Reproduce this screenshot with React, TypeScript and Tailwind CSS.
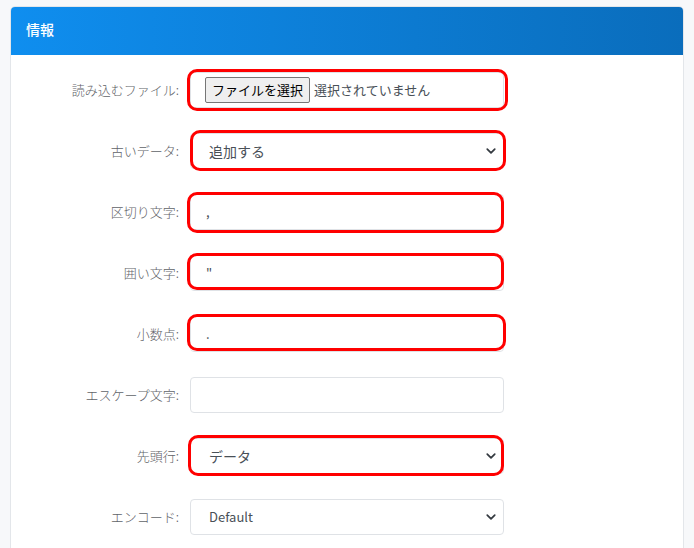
import type { ReactNode } from "react";

const jp = { fontFamily: '"Noto Sans CJK JP", "Noto Sans", sans-serif' };

function Chevron() {
  return (
    <svg width="10" height="10" viewBox="0 0 16 16" className="text-[#343a40]">
      <path d="M2 5l6 6 6-6" fill="none" stroke="currentColor" strokeWidth="2.8" strokeLinecap="round" strokeLinejoin="round" />
    </svg>
  );
}

function Highlight({ className }: { className: string }) {
  return <div className={`pointer-events-none absolute rounded-[10px] border-[3.5px] border-[#ff0000] ${className}`} />;
}

function Row({ label, children, mark }: { label: string; children: ReactNode; mark?: string }) {
  return (
    <div className="flex items-center">
      <div className="w-[168px] text-right text-[13px] font-light text-[#5f6368]" style={jp}>
        {label}:
      </div>
      <div className="relative ml-[11px] w-[314px]">
        {children}
        {mark && <Highlight className={mark} />}
      </div>
    </div>
  );
}

function TextBox({ value }: { value?: string }) {
  return (
    <div className="flex h-[36px] items-center rounded-[4px] border border-[#dfe2e6] bg-white px-[15px] text-[13px] text-[#495057]">
      {value}
    </div>
  );
}

function SelectBox({ value, size = "text-[14px]" }: { value: string; size?: string }) {
  return (
    <div className="flex h-[36px] items-center justify-between rounded-[4px] border border-[#dfe2e6] bg-white pl-[18px] pr-[7px] text-[#495057]">
      <span className={size} style={jp}>{value}</span>
      <Chevron />
    </div>
  );
}

export default function App() {
  return (
    <div className="min-h-[548px] bg-[#f7f8fa] pt-[6px] pl-[10px] pr-[10px]" style={jp}>
      <div className="h-[560px] rounded-t-[5px] border border-[#e3e6ea] bg-white">
        <div className="flex h-[48px] items-center rounded-t-[4px] bg-gradient-to-r from-[#0f8eef] to-[#0a6dbc] px-[15px] pb-[4px]">
          <h3 className="text-[14px] font-medium text-white">情報</h3>
        </div>
        <div className="flex flex-col gap-[25px] pt-[17px]">
          <Row label="読み込むファイル" mark="-left-[3px] -right-[4px] -top-[3px] -bottom-[3px]">
            <div className="flex h-[36px] items-center rounded-[4px] border border-[#dfe2e6] bg-white pl-[14px] text-[13px] text-[#495057]">
              <span className="rounded-[2px] border border-[#767676] bg-[#efefef] px-[6px] py-[2px] text-[13px] text-black">
                ファイルを選択
              </span>
              <span className="ml-[4px]">選択されていません</span>
            </div>
          </Row>
          <Row label="古いデータ" mark="left-0 right-[-2px] -top-[3px] -bottom-[2px]">
            <SelectBox value="追加する" />
          </Row>
          <Row label="区切り文字" mark="-left-[3px] right-0 -top-[2px] -bottom-[3px]">
            <TextBox value="," />
          </Row>
          <Row label="囲い文字" mark="-left-[3px] right-0 -top-[2px] bottom-[1px]">
            <TextBox value={'"'} />
          </Row>
          <Row label="小数点" mark="-left-[3px] right-[-2px] -top-[2px] bottom-[1px]">
            <TextBox value="." />
          </Row>
          <Row label="エスケープ文字">
            <TextBox />
          </Row>
          <Row label="先頭行" mark="-left-[2px] right-0 -top-[3px] -bottom-[2px]">
            <SelectBox value="データ" />
          </Row>
          <Row label="エンコード">
            <SelectBox value="Default" size="text-[13px]" />
          </Row>
        </div>
      </div>
    </div>
  );
}
